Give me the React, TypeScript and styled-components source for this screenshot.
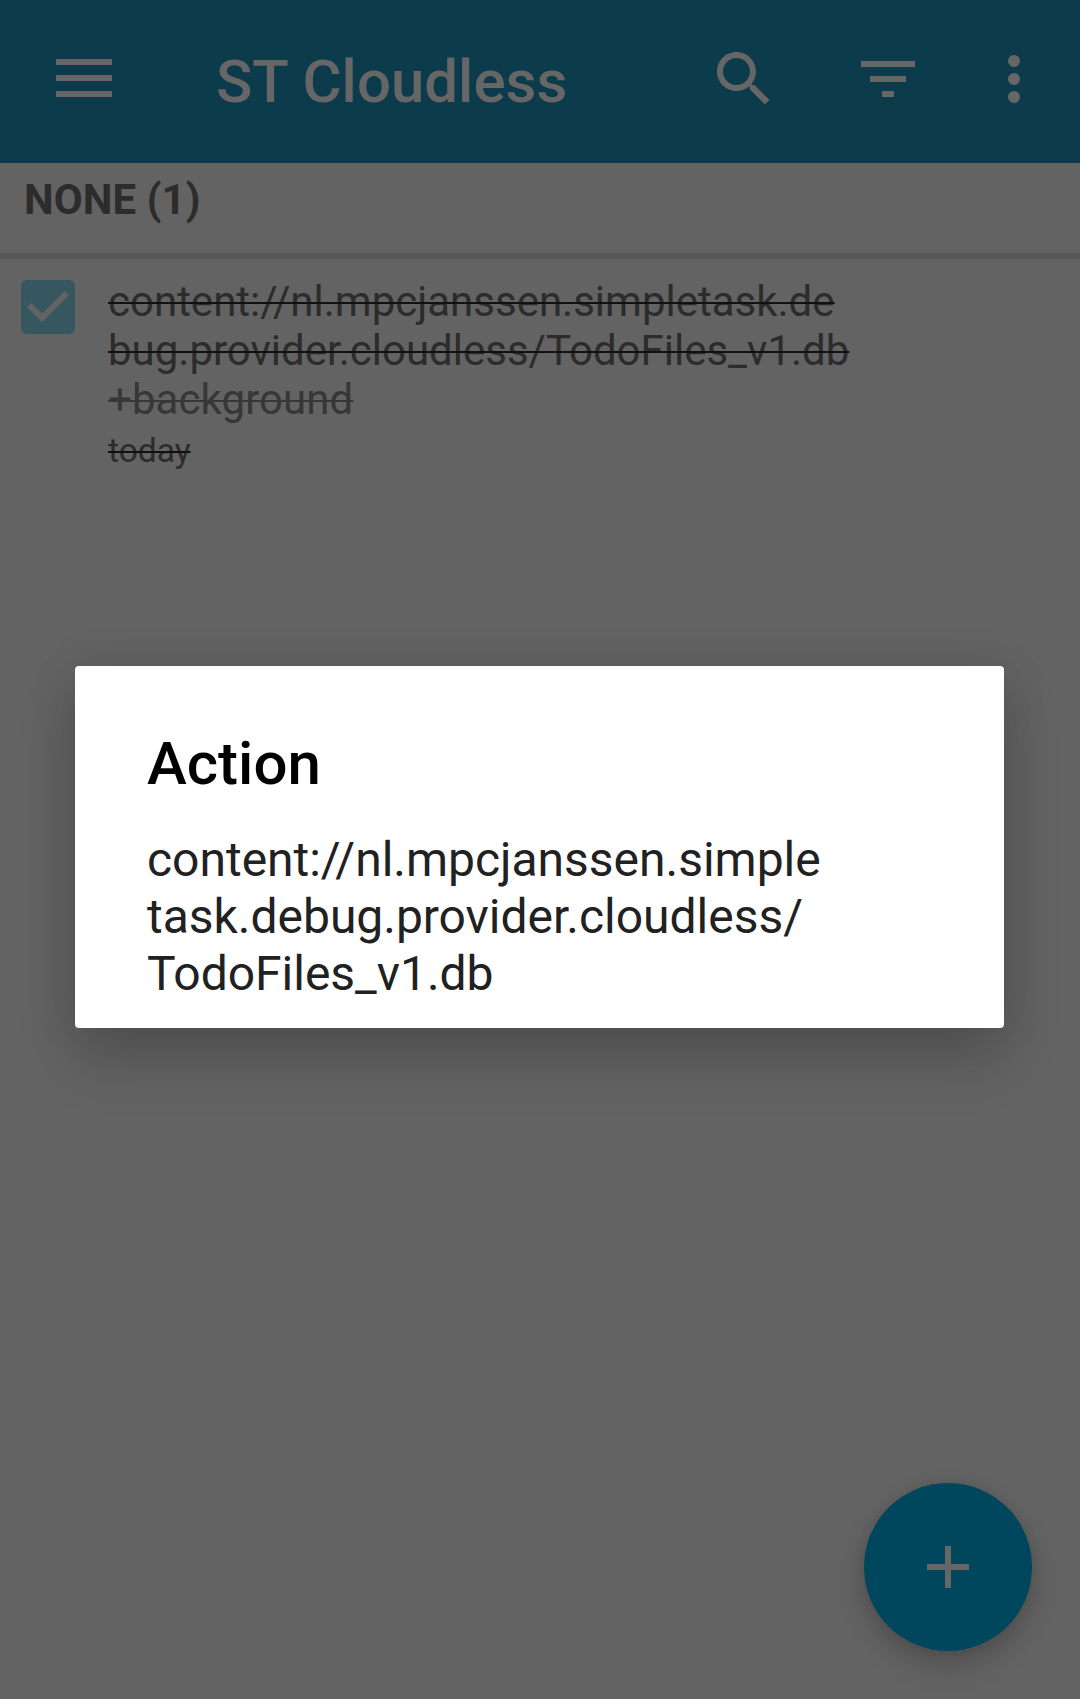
import React from "react";
import styled, { createGlobalStyle } from "styled-components";

const Global = createGlobalStyle`
  html, body { margin: 0; padding: 0; background: #636363; }
  * { box-sizing: border-box; }
`;

const Screen = styled.div`
  position: relative;
  display: flex;
  flex-direction: column;
  width: 1080px;
  height: 1699px;
  overflow: hidden;
  background: #636363;
  font-family: Roboto, "Noto Sans", sans-serif;
`;

const Toolbar = styled.header`
  display: flex;
  align-items: flex-start;
  height: 163px;
  padding: 43px 30px 0 48px;
  background: #0c3c4c;
  color: #666;
`;

const Icon = styled.svg`
  display: block;
  flex: none;
  width: 72px;
  height: 72px;
  fill: currentColor;
`;

const AppTitle = styled.h1`
  flex: 1;
  margin: 3px 0 0 96px;
  font-size: 60px;
  font-weight: 500;
  line-height: 71px;
  white-space: nowrap;
`;

const Actions = styled.div`
  display: flex;
  gap: 72px;
`;

const Overflow = styled(Icon)`
  margin-left: -18px;
`;

const SectionHeader = styled.h2`
  height: 96px;
  margin: 0;
  padding: 12px 24px 0;
  border-bottom: 6px solid #575757;
  color: #2c2c2c;
  font-size: 42px;
  font-weight: 700;
  letter-spacing: 0.1px;
  line-height: 49px;
`;

const Task = styled.div`
  display: flex;
  gap: 24px;
  padding: 12px 12px 0;
`;

const CheckIcon = styled(Icon)`
  color: #36575f;
`;

const TaskBody = styled.div`
  display: flex;
  flex-direction: column;
  align-items: flex-start;
  padding-top: 6px;
`;

const TaskLine = styled.span<{ $muted?: boolean }>`
  color: ${(p) => (p.$muted ? "#373737" : "#2c2c2c")};
  font-size: 42px;
  letter-spacing: ${(p) => (p.$muted ? "0.07px" : "0")};
  line-height: 49px;
  text-decoration: line-through;
  text-decoration-color: ${(p) => (p.$muted ? "#373737" : "#121010")};
  text-decoration-thickness: 2px;
  white-space: nowrap;
`;

const TaskDate = styled(TaskLine)`
  margin-top: 7px;
  font-size: 33.6px;
  line-height: 39px;
`;

const Fab = styled.button`
  position: absolute;
  right: 48px;
  bottom: 48px;
  display: grid;
  place-items: center;
  width: 168px;
  height: 168px;
  padding: 0;
  border: 0;
  border-radius: 50%;
  background: #00475e;
  color: #666;
  box-shadow: 0 14px 30px rgba(0, 0, 0, 0.2), 0 0 12px rgba(0, 0, 0, 0.08);
`;

const Dialog = styled.section`
  position: absolute;
  left: 75px;
  top: 666px;
  width: 929px;
  height: 362px;
  padding: 62px 72px 0;
  border-radius: 4px;
  background: #fff;
  box-shadow: 0 30px 60px rgba(0, 0, 0, 0.19), 0 0 50px rgba(0, 0, 0, 0.08);
`;

const DialogTitle = styled.h3`
  margin: 0;
  color: #000;
  font-size: 60px;
  font-weight: 500;
  line-height: 71px;
`;

const DialogItem = styled.div`
  margin-top: 32px;
  color: #212121;
  font-size: 48px;
  letter-spacing: -0.02px;
  line-height: 57px;
  white-space: pre;
`;

const taskLines = [
  "content://nl.mpcjanssen.simpletask.de",
  "bug.provider.cloudless/TodoFiles_v1.db",
];

const dialogText = [
  "content://nl.mpcjanssen.simple",
  "task.debug.provider.cloudless/",
  "TodoFiles_v1.db",
].join("\n");

export default function App() {
  return (
    <>
      <Global />
      <Screen>
        <Toolbar>
          <Icon viewBox="0 0 24 24">
            <path d="M2.67 5.33h18.66v2H2.67zM2.67 10.67h18.66v2H2.67zM2.67 16h18.66v2H2.67z" />
          </Icon>
          <AppTitle>ST Cloudless</AppTitle>
          <Actions>
            <Icon viewBox="0 0 24 24">
              <path d="M15.5 14h-.79l-.28-.27C15.41 12.59 16 11.11 16 9.5 16 5.91 13.09 3 9.5 3S3 5.91 3 9.5 5.91 16 9.5 16c1.61 0 3.09-.59 4.23-1.57l.27.28v.79l5 4.99L20.49 19l-4.99-5zm-6 0C7.01 14 5 11.99 5 9.5S7.01 5 9.5 5 14 7.01 14 9.5 11.99 14 9.5 14z" />
            </Icon>
            <Icon viewBox="0 0 24 24">
              <path d="M10 18h4v-2h-4v2zM3 6v2h18V6H3zm3 7h12v-2H6v2z" />
            </Icon>
            <Overflow viewBox="0 0 24 24">
              <circle cx="12" cy="6" r="2" />
              <circle cx="12" cy="12" r="2" />
              <circle cx="12" cy="18" r="2" />
            </Overflow>
          </Actions>
        </Toolbar>
        <SectionHeader>NONE (1)</SectionHeader>
        <Task>
          <CheckIcon viewBox="0 0 24 24">
            <path d="M19 3H5c-1.11 0-2 .9-2 2v14c0 1.1.89 2 2 2h14c1.11 0 2-.9 2-2V5c0-1.1-.89-2-2-2zm-9 14l-5-5 1.41-1.41L10 14.17l7.59-7.59L19 8l-9 9z" />
          </CheckIcon>
          <TaskBody>
            {taskLines.map((line) => (
              <TaskLine key={line}>{line}</TaskLine>
            ))}
            <TaskLine $muted>+background</TaskLine>
            <TaskDate>today</TaskDate>
          </TaskBody>
        </Task>
        <Fab aria-label="Add">
          <Icon viewBox="0 0 24 24">
            <path d="M19 13h-6v6h-2v-6H5v-2h6V5h2v6h6v2z" />
          </Icon>
        </Fab>
        <Dialog role="dialog">
          <DialogTitle>Action</DialogTitle>
          <DialogItem>{dialogText}</DialogItem>
        </Dialog>
      </Screen>
    </>
  );
}
